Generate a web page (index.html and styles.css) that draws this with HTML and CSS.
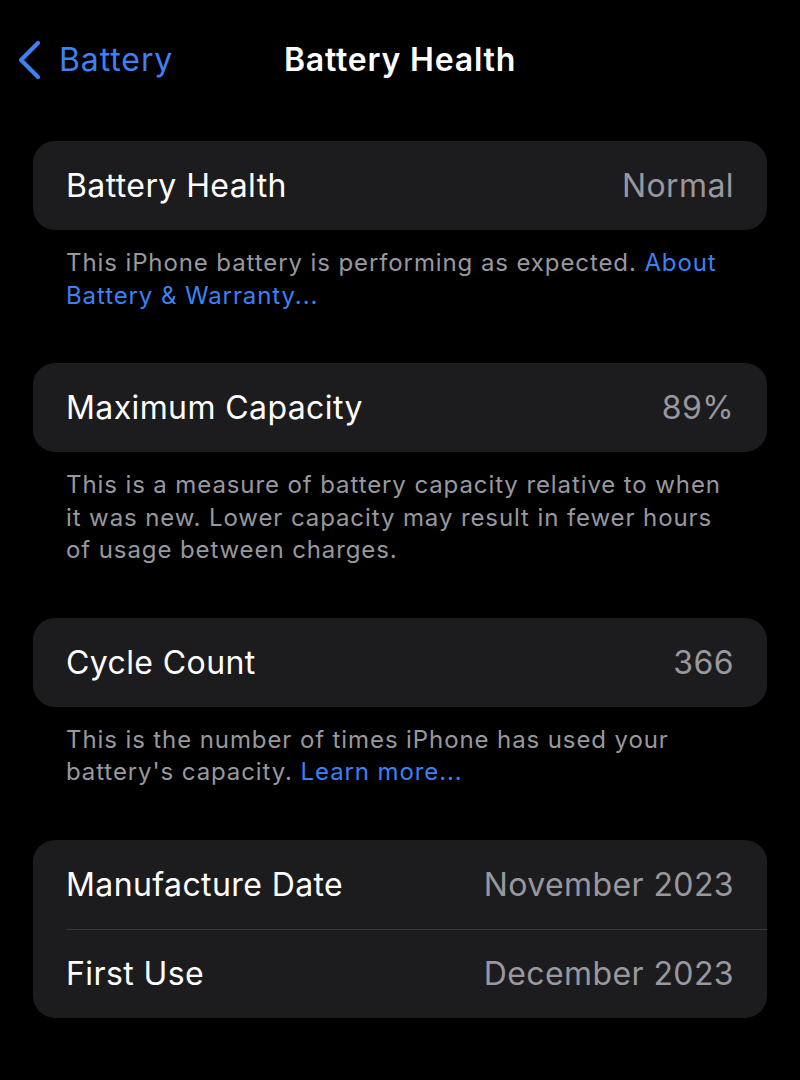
FILE: index.html
```html
<!DOCTYPE html>
<html lang="en">
<head>
<meta charset="utf-8">
<title>Battery Health</title>
<link rel="stylesheet" href="styles.css">
</head>
<body>
<div class="screen">
  <header class="nav">
    <a class="back">
      <svg class="chev" width="28" height="40" viewBox="0 0 28 40"><path d="M22 3 L5 20 L22 37" fill="none" stroke="#3a82f6" stroke-width="4.2" stroke-linecap="round" stroke-linejoin="round"/></svg>
      <span class="back-label">Battery</span>
    </a>
    <h1 class="title">Battery Health</h1>
  </header>

  <section class="group">
    <div class="card">
      <div class="row"><span class="label">Battery Health</span><span class="value">Normal</span></div>
    </div>
    <p class="footer">This iPhone battery is performing as expected. <span class="link">About Battery &amp; Warranty...</span></p>
  </section>

  <section class="group">
    <div class="card">
      <div class="row"><span class="label">Maximum Capacity</span><span class="value">89%</span></div>
    </div>
    <p class="footer">This is a measure of battery capacity relative to when it was new. Lower capacity may result in fewer hours of usage between charges.</p>
  </section>

  <section class="group">
    <div class="card">
      <div class="row"><span class="label">Cycle Count</span><span class="value">366</span></div>
    </div>
    <p class="footer">This is the number of times iPhone has used your battery's capacity. <span class="link">Learn more...</span></p>
  </section>

  <section class="group">
    <div class="card">
      <div class="row"><span class="label">Manufacture Date</span><span class="value">November 2023</span></div>
      <div class="row sep"><span class="label">First Use</span><span class="value">December 2023</span></div>
    </div>
  </section>
</div>
</body>
</html>
```
FILE: styles.css
```css
html, body {
  margin: 0;
  padding: 0;
  background: #000;
}
body {
  font-family: Inter, "Noto Sans", "Liberation Sans", sans-serif;
  color: #fff;
  -webkit-font-smoothing: antialiased;
}
.screen {
  width: 800px;
  height: 1080px;
  overflow: hidden;
}
.nav {
  position: relative;
  height: 141px;
}
.back {
  position: absolute;
  left: 16px;
  top: 40px;
  display: flex;
  align-items: center;
  gap: 15px;
  color: #3a82f6;
}
.chev {
  display: block;
}
.back-label {
  font-size: 32px;
  line-height: 40px;
  letter-spacing: 0.9px;
}
.title {
  margin: 0;
  padding-top: 40px;
  text-align: center;
  font-size: 32px;
  line-height: 40px;
  font-weight: 600;
  letter-spacing: 0.8px;
}
.group {
  padding: 0 33px;
}
.card {
  background: #1c1c1e;
  border-radius: 22px;
  overflow: hidden;
}
.row {
  height: 89px;
  display: flex;
  align-items: center;
  justify-content: space-between;
  padding: 0 33px;
  font-size: 32px;
  letter-spacing: 0.4px;
}
.row.sep {
  position: relative;
}
.row.sep::before {
  content: "";
  position: absolute;
  left: 33px;
  right: 0;
  top: 0;
  height: 1px;
  background: #38383a;
}
.value {
  color: #98989e;
}
.footer {
  margin: 0;
  padding: 17px 33px 51px;
  font-size: 24px;
  line-height: 32.5px;
  color: #98989e;
  letter-spacing: 0.9px;
}
.link {
  color: #3a82f6;
}
```
